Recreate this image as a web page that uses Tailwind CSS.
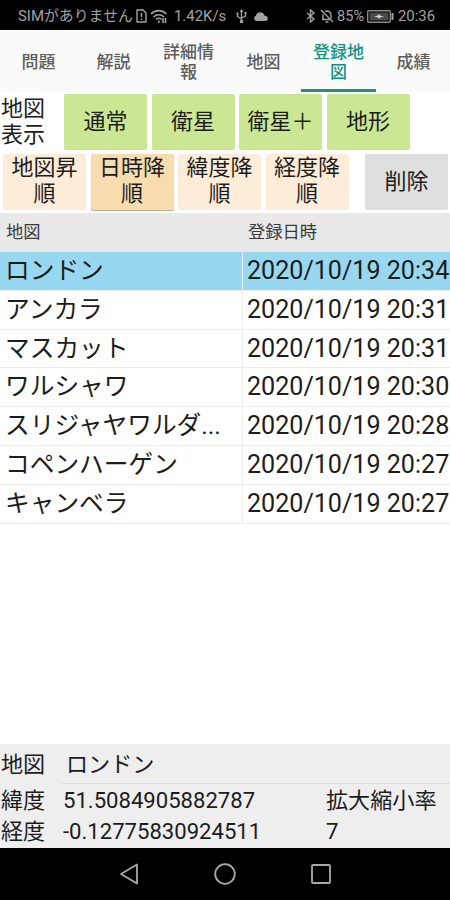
<!DOCTYPE html>
<html lang="ja">
<head>
    <meta charset="UTF-8">
    <meta name="viewport" content="width=device-width, initial-scale=1.0">
    <title>登録地図</title>
    <script src="https://cdn.jsdelivr.net/npm/@tailwindcss/browser@4"></script>
</head>
<body class="bg-white text-[#1c1c1c] font-[Roboto,'Noto_Sans_CJK_JP',sans-serif]">
    <div class="flex flex-col w-[450px] h-[900px] overflow-hidden">
        <!-- Status bar -->
        <div class="flex items-center h-[30px] shrink-0 bg-black pl-[18px] pr-[15px] pt-[2px] text-[14.900px] leading-none text-[#a3a3a3] whitespace-nowrap">
            <span class="w-[118px]">SIMがありません</span>
            <svg class="w-[11px] h-[14px]" viewBox="0 0 11 14" fill="none" stroke="currentColor" stroke-width="1.4">
                <path d="M1 1h6l3 3v9H1z" />
                <path d="M5.5 4v4M5.5 9.5v1.5" />
            </svg>
            <svg class="ml-[3px] w-[18px] h-[15px]" viewBox="0 0 18 15" fill="none" stroke="currentColor" stroke-width="1.6">
                <path d="M1 5c4.500-4.500 11-4.500 15.500 0M3.500 8c3-3 7.500-3 10.500 0M6 10.500c1.500-1.500 4-1.500 5.500 0" />
                <path d="M8.800 11.500v2.500M13 9v5M15.500 9v5" />
            </svg>
            <span class="ml-[6px] w-[56px]">1.42K/s</span>
            <svg class="ml-[6px] w-[11px] h-[14px]" viewBox="0 0 11 14" fill="none" stroke="currentColor" stroke-width="1.3">
                <path d="M5.500 2v10M1.500 5v2.500l4 2.500M9.500 4v3l-4 2" />
                <path d="M5.500 0l2 3h-4zM4 11h3v3H4zM.5 3.500h2v2h-2zM8.500 3h2v2h-2z" fill="currentColor" stroke="none" />
            </svg>
            <svg class="ml-[6px] w-[15px] h-[9px]" viewBox="0 0 15 9" fill="currentColor">
                <path d="M3 9a3 3 0 0 1 0-5.500C4-.5 10-1 11.500 3.500 16 4 15.500 9 12.500 9z" />
            </svg>
            <svg class="ml-auto w-[10px] h-[14px]" viewBox="0 0 10 14" fill="none" stroke="currentColor" stroke-width="1.4">
                <path d="M1 4l7 6-3.500 3V1L8 4l-7 6" />
            </svg>
            <svg class="ml-[4px] w-[14px] h-[14px]" viewBox="0 0 14 14" fill="none" stroke="currentColor" stroke-width="1.4">
                <path d="M1 1l12 12M2 10.500h8.500M3 10V5.500M5 2.700c3-1.700 6 .3 6 3.300v3.500M5.500 13h3" />
            </svg>
            <span class="ml-[3px] w-[28px] text-[14.600px]">85%</span>
            <svg class="ml-[2px] w-[27px] h-[13px]" viewBox="0 0 27 13" fill="none">
                <rect x=".7" y=".7" width="22.600" height="11.600" rx="1" stroke="#8a8a8a" stroke-width="1.400" />
                <rect x="2.500" y="2.500" width="19" height="8" fill="#4a4a4a" />
                <path d="M25.500 3v7" stroke="#a3a3a3" stroke-width="2" />
                <path d="M7 6.500l4-1 1-1.700 1 1.700 4 1-4 1-1 1.700-1-1.700z" fill="#d0d0d0" />
            </svg>
            <span class="ml-[4px] w-[37px]">20:36</span>
        </div>

        <!-- Tabs -->
        <nav class="grid grid-cols-6 h-[62px] shrink-0 bg-[#fafafa] pl-[1px] -mr-px pt-px text-center text-[17px] leading-[20px] font-medium text-[#5c5c5c]">
            <a class="flex items-center justify-center">問題</a>
            <a class="flex items-center justify-center">解説</a>
            <a class="flex items-center justify-center px-[10px]">詳細情<br>報</a>
            <a class="flex items-center justify-center">地図</a>
            <a class="flex items-center justify-center pt-[3px] border-b-3 border-[#26907f] text-[#12907f]">登録地<br>図</a>
            <a class="flex items-center justify-center">成績</a>
        </nav>

        <!-- Map type -->
        <div class="flex h-[61px] shrink-0 pt-[2px] text-[22px] leading-[26px]">
            <div class="w-[64px] pl-px pt-[2px]">地図<br>表示</div>
            <div class="flex gap-[4.500px] h-[56px]">
                <button class="w-[83px] rounded-[2px] bg-[#cbe793]">通常</button>
                <button class="w-[83px] rounded-[2px] bg-[#cbe793]">衛星</button>
                <button class="w-[83px] rounded-[2px] bg-[#cbe793] whitespace-nowrap">衛星＋</button>
                <button class="w-[83px] rounded-[2px] bg-[#cbe793]">地形</button>
            </div>
        </div>

        <!-- Sort order -->
        <div class="flex gap-[4.500px] h-[60px] shrink-0 pt-px pl-[3px] pr-[2px] text-[22px] leading-[26px]">
            <button class="w-[83px] h-[56px] rounded-[2px] bg-[#fdecd8] pb-[2px]">地図昇<br>順</button>
            <button class="w-[83px] h-[56px] rounded-[2px] bg-[#f6dcae] pb-[2px] shadow-[0_1px_1px_#b9aa90]">日時降<br>順</button>
            <button class="w-[83px] h-[56px] rounded-[2px] bg-[#fdecd8] pb-[2px]">緯度降<br>順</button>
            <button class="w-[83px] h-[56px] rounded-[2px] bg-[#fdecd8] pb-[2px]">経度降<br>順</button>
            <button class="ml-auto w-[83px] h-[56px] rounded-[2px] bg-[#dfdfdf]">削除</button>
        </div>

        <!-- Registered maps -->
        <div class="grid grid-cols-[242px_208px] h-[39px] shrink-0 items-center bg-[#e9e9e9] pt-px text-[17.300px] text-[#3a3a3a]">
            <div class="pl-[6px]">地図</div>
            <div class="pl-[6px]">登録日時</div>
        </div>
        <div id="rows" class="shrink-0 text-[24.700px] leading-[38px] whitespace-nowrap"></div>

        <!-- Selected map -->
        <div class="mt-auto h-[104px] shrink-0 bg-[#eeeeee] text-[22.100px] leading-[31px]">
            <div class="flex h-[40px] items-center">
                <div class="w-[62px] pl-px">地図</div>
                <div class="flex-1 h-[40px] border-b border-[#dcdcdc] pl-[4px] leading-[40px]">ロンドン</div>
            </div>
            <div class="grid grid-cols-[63px_263px_124px] pt-px">
                <div class="pl-px">緯度</div>
                <div>51.5084905882787</div>
                <div class="whitespace-nowrap">拡大縮小率</div>
                <div class="pl-px">経度</div>
                <div>-0.12775830924511</div>
                <div>7</div>
            </div>
        </div>

        <!-- Navigation bar -->
        <div class="flex items-center h-[52px] shrink-0 bg-black pl-[119px] gap-[75px] text-[#aaaaaa]">
            <svg class="w-[20px] h-[22px]" viewBox="0 0 20 22" fill="none" stroke="currentColor" stroke-width="1.800" stroke-linejoin="round">
                <path d="M18 1.500v19L2 11z" />
            </svg>
            <svg class="w-[22px] h-[22px]" viewBox="0 0 22 22" fill="none" stroke="currentColor" stroke-width="1.800">
                <circle cx="11" cy="11" r="9.800" />
            </svg>
            <svg class="w-[20px] h-[20px]" viewBox="0 0 20 20" fill="none" stroke="currentColor" stroke-width="1.800">
                <rect x="1" y="1" width="18" height="18" rx="1" />
            </svg>
        </div>
    </div>

    <script>
        const maps = [
            ['ロンドン', '2020/10/19 20:34'],
            ['アンカラ', '2020/10/19 20:31'],
            ['マスカット', '2020/10/19 20:31'],
            ['ワルシャワ', '2020/10/19 20:30'],
            ['スリジャヤワルダ...', '2020/10/19 20:28'],
            ['コペンハーゲン', '2020/10/19 20:27'],
            ['キャンベラ', '2020/10/19 20:27'],
        ];

        // First row is the selected one
        document.getElementById('rows').innerHTML = maps.map(([name, date], i) => `
            <div class="grid grid-cols-[243px_207px] h-[38.800px] border-b border-[#ececec] ${i === 0 ? 'bg-[#98d7f0]' : ''}">
                <div class="pl-[5px] border-r border-[#ececec]">${name}</div>
                <div class="pl-[4px] text-[25.100px]">${date}</div>
            </div>`).join('');
    </script>
</body>
</html>
